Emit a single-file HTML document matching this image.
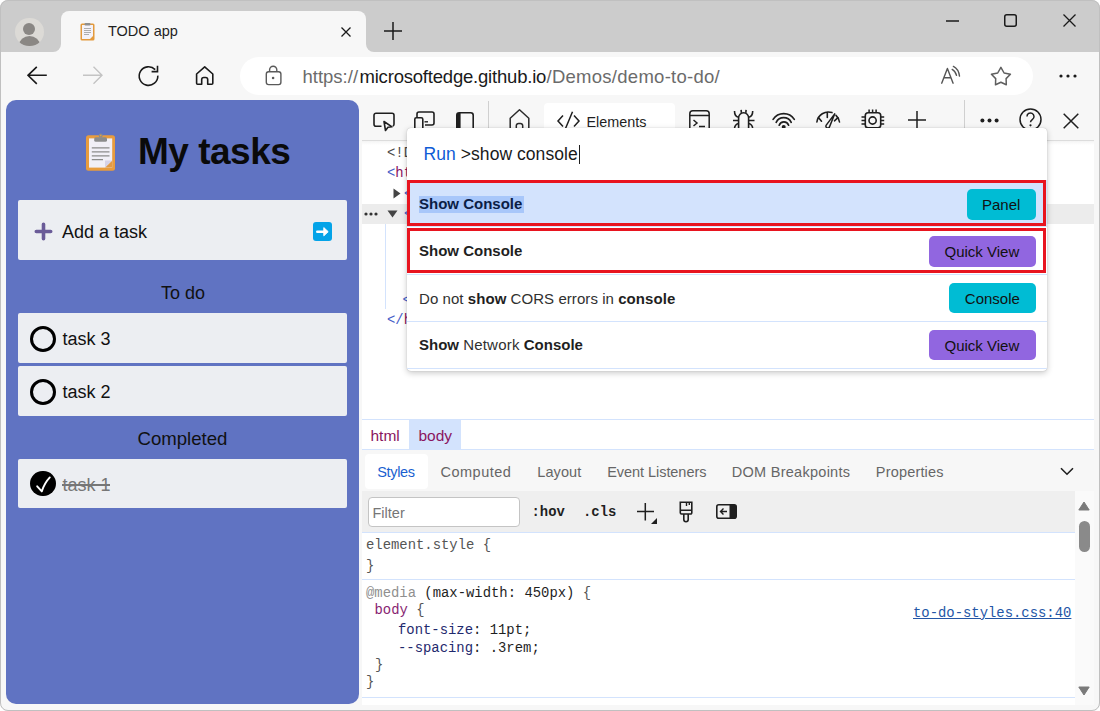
<!DOCTYPE html>
<html><head><meta charset="utf-8">
<style>
*{box-sizing:border-box;margin:0;padding:0}
html,body{width:1100px;height:711px;overflow:hidden;background:#fff;font-family:"Liberation Sans",sans-serif}
.a{position:absolute}
#win{position:absolute;left:0;top:0;width:1100px;height:711px;border-radius:8px;background:#cccccc;overflow:hidden}
svg{position:absolute;overflow:visible}
.t{position:absolute;white-space:pre;line-height:1}
.mono{font-family:"Liberation Mono",monospace}
</style></head><body>
<div id="win">
  <!-- tab -->
  <div class="a" style="left:61px;top:11px;width:305px;height:41px;background:#f7f7f7;border-radius:8px 8px 0 0"></div>
  <div class="a" style="left:53px;top:44px;width:8px;height:8px;background:#f7f7f7"></div>
  <div class="a" style="left:45px;top:36px;width:16px;height:16px;background:#cccccc;border-radius:0 0 8px 0"></div>
  <div class="a" style="left:366px;top:44px;width:8px;height:8px;background:#f7f7f7"></div>
  <div class="a" style="left:366px;top:36px;width:16px;height:16px;background:#cccccc;border-radius:0 0 0 8px"></div>
  <!-- toolbar + content bg -->
  <div class="a" style="left:0;top:52px;width:1100px;height:659px;background:#f7f7f7"></div>
  <!-- address bar -->
  <div class="a" style="left:240px;top:57px;width:793px;height:38px;background:#fff;border-radius:19px"></div>

  <!-- profile avatar -->
  <div class="a" style="left:15px;top:17.5px;width:28.5px;height:28.5px;border-radius:50%;background:#dcdad6;overflow:hidden">
    <div class="a" style="left:8.2px;top:5.2px;width:12px;height:12px;border-radius:50%;background:#8a8784"></div>
    <div class="a" style="left:3.8px;top:18.2px;width:21px;height:18px;border-radius:50%;background:#8a8784"></div>
  </div>
  <!-- tab favicon -->
  <svg style="left:80px;top:22px" width="15" height="19" viewBox="0 0 15 19">
    <rect x="0.5" y="1.5" width="14" height="17" rx="1.5" fill="#e39a3c"/>
    <rect x="2" y="3" width="11" height="14" fill="#f4f2f8"/>
    <path d="M10 17 L13 14 L13 17 Z" fill="#e39a3c"/>
    <rect x="4.5" y="1" width="6" height="2.5" rx="1" fill="#8f8f8f"/>
    <path d="M4 6.5h7M4 8.5h7M4 10.5h7M4 12.5h5" stroke="#9a9a9a" stroke-width="0.8"/>
  </svg>
  <div class="t" style="left:108px;top:24px;font-size:14.5px;color:#1f1f1f">TODO app</div>
  <!-- tab close -->
  <svg style="left:341px;top:27px" width="10" height="10"><path d="M0.5 0.5L9.5 9.5M9.5 0.5L0.5 9.5" stroke="#1a1a1a" stroke-width="1.3"/></svg>
  <!-- new tab plus -->
  <svg style="left:384px;top:22px" width="18" height="18"><path d="M9 0V18M0 9H18" stroke="#1a1a1a" stroke-width="1.5"/></svg>
  <!-- window controls -->
  <svg style="left:946px;top:20px" width="13" height="2"><path d="M0 1H13" stroke="#1a1a1a" stroke-width="1.5"/></svg>
  <svg style="left:1004px;top:14px" width="13" height="13"><rect x="0.75" y="0.75" width="11.5" height="11.5" rx="2" fill="none" stroke="#1a1a1a" stroke-width="1.5"/></svg>
  <svg style="left:1063px;top:14px" width="13" height="13"><path d="M0.5 0.5L12.5 12.5M12.5 0.5L0.5 12.5" stroke="#1a1a1a" stroke-width="1.3"/></svg>

  <!-- nav icons -->
  <svg style="left:27px;top:66px" width="21" height="19"><path d="M1 9.3H19.8M9.8 0.8L1 9.3L9.8 17.8" fill="none" stroke="#1a1a1a" stroke-width="1.6"/></svg>
  <svg style="left:83px;top:66px" width="21" height="19"><path d="M0 9.3H19M10.5 0.8L19 9.3L10.5 17.8" fill="none" stroke="#c4c4c4" stroke-width="1.4"/></svg>
  <svg style="left:138px;top:65px" width="22" height="22"><path d="M19.8 10.6A9.3 9.3 0 1 1 17.2 4.6" fill="none" stroke="#1a1a1a" stroke-width="1.6"/><path d="M19.5 0.8V6.6H13.6" fill="none" stroke="#1a1a1a" stroke-width="1.6"/></svg>
  <svg style="left:194px;top:66px" width="21" height="20"><path d="M2.6 8L10.7 0.9L18.8 8V17.2a1 1 0 0 1-1 1H13.7V13.6a2.1 2.1 0 0 0-2.1-2.1H9.8a2.1 2.1 0 0 0-2.1 2.1V18.2H3.6a1 1 0 0 1-1-1Z" fill="none" stroke="#1a1a1a" stroke-width="1.6" stroke-linejoin="round"/></svg>
  <!-- lock -->
  <svg style="left:264px;top:65px" width="18" height="21"><path d="M5.6 6.5V4.8a3.6 3.6 0 0 1 7.2 0V6.5" fill="none" stroke="#5a5a5a" stroke-width="1.4"/><rect x="2.3" y="6.8" width="14.6" height="12.8" rx="2.3" fill="none" stroke="#5a5a5a" stroke-width="1.4"/><circle cx="9.1" cy="13" r="1.3" fill="#5a5a5a"/></svg>
  <div class="t" style="left:302.5px;top:67.5px;font-size:18.5px;color:#6b6b6b">https://</div>
  <div class="t" style="left:359.5px;top:67.5px;font-size:18.5px;color:#1a1a1a;letter-spacing:-0.2px">microsoftedge.github.io</div>
  <div class="t" style="left:546.5px;top:67.5px;font-size:18.5px;color:#6b6b6b;letter-spacing:0.27px">/Demos/demo-to-do/</div>
  <!-- read aloud -->
  <svg style="left:941px;top:66px" width="20" height="19"><path d="M0.7 17.2L6.4 2.5L12.1 17.2M3.2 11.7H9.6" fill="none" stroke="#555" stroke-width="1.4" stroke-linecap="round" stroke-linejoin="round"/><path d="M11.2 3.4Q14.6 5.3 15.5 9.4M12.4 0.4Q17.6 3 18.5 10.1" fill="none" stroke="#555" stroke-width="1.4" stroke-linecap="round"/></svg>
  <!-- star -->
  <svg style="left:990px;top:66px" width="22" height="21"><path d="M10.9 1.4L14.1 7L20.4 8.3L16.1 12.6L16.3 18.8L10.9 16.2L5.5 18.8L5.7 12.6L1.4 8.3L7.7 7Z" fill="none" stroke="#5f5f5f" stroke-width="1.5" stroke-linejoin="round"/></svg>
  <!-- more -->
  <svg style="left:1059px;top:74px" width="18" height="4"><circle cx="2" cy="2" r="1.6" fill="#1a1a1a"/><circle cx="9" cy="2" r="1.6" fill="#1a1a1a"/><circle cx="16" cy="2" r="1.6" fill="#1a1a1a"/></svg>

  <!-- ============ APP PANEL ============ -->
  <div class="a" style="left:6px;top:100px;width:353px;height:604px;background:#6073c2;border-radius:10px"></div>

  <!-- clipboard emoji -->
  <svg style="left:86px;top:134.5px" width="29" height="36" viewBox="0 0 29 36">
    <rect x="0" y="0.3" width="29" height="35.4" rx="2.5" fill="#e89c3e"/>
    <rect x="3" y="3.4" width="23.2" height="29.2" fill="#f1eff7"/>
    <path d="M19 32.6L26.2 25.4V32.6Z" fill="#e09a48"/>
    <path d="M19 32.6V25.4H26.2Z" fill="#d6d2e8"/>
    <rect x="8.2" y="2.2" width="12.8" height="4.6" rx="1.6" fill="#8c8c8c"/>
    <circle cx="14.7" cy="0.6" r="2" fill="#8c8c8c"/>
    <circle cx="14.7" cy="0.6" r="0.8" fill="#e89c3e"/>
    <path d="M5.8 12.9h17.7M5.8 16.8h17.7M5.8 20.8h17.7M5.8 24.7h11.2" stroke="#8c8c8c" stroke-width="1.3"/>
  </svg>
  <div class="t" style="left:138px;top:133.2px;font-size:37px;font-weight:700;color:#0a0a0a;letter-spacing:-0.5px">My tasks</div>
  <!-- add task box -->
  <div class="a" style="left:18px;top:200px;width:329px;height:60px;background:#eceef2;border-radius:2px"></div>
  <svg style="left:34px;top:222px" width="19" height="19"><path d="M9.5 2.3V16.7M2.3 9.5H16.7" stroke="#6a5b98" stroke-width="3.6" stroke-linecap="round"/></svg>
  <div class="t" style="left:62px;top:222.6px;font-size:18px;color:#111">Add a task</div>
  <div class="a" style="left:313px;top:222px;width:18.7px;height:19px;background:#04a3e8;border-radius:3px"></div>
  <svg style="left:313px;top:222px" width="19" height="19"><path d="M4.3 9.7H11.5" stroke="#fff" stroke-width="2.6" stroke-linecap="round"/><path d="M10.8 5.6L15.2 9.7L10.8 13.8Z" fill="#fff" stroke="#fff" stroke-width="1" stroke-linejoin="round"/></svg>
  <div class="t" style="left:161px;top:284px;font-size:18px;color:#111">To do</div>
  <!-- task 3 -->
  <div class="a" style="left:18px;top:313px;width:329px;height:50px;background:#eceef2;border-radius:2px"></div>
  <div class="a" style="left:30px;top:326px;width:26px;height:26px;border:3px solid #000;border-radius:50%"></div>
  <div class="t" style="left:62.5px;top:330px;font-size:18px;color:#111">task 3</div>
  <!-- task 2 -->
  <div class="a" style="left:18px;top:366px;width:329px;height:50px;background:#eceef2;border-radius:2px"></div>
  <div class="a" style="left:30px;top:379px;width:26px;height:26px;border:3px solid #000;border-radius:50%"></div>
  <div class="t" style="left:62.5px;top:383px;font-size:18px;color:#111">task 2</div>
  <div class="t" style="left:137.5px;top:430px;font-size:18.6px;color:#111">Completed</div>
  <!-- task 1 -->
  <div class="a" style="left:18px;top:459px;width:329px;height:49px;background:#eceef2;border-radius:2px"></div>
  <div class="a" style="left:30.4px;top:470.8px;width:25.6px;height:25.6px;background:#000;border-radius:50%"></div>
  <svg style="left:30px;top:471px" width="26" height="26"><path d="M7.2 15.3L11.8 20.4Q14.3 12.3 19.8 6.4" fill="none" stroke="#fff" stroke-width="1.9" stroke-linecap="round" stroke-linejoin="round"/></svg>
  <div class="t" style="left:62.5px;top:476px;font-size:18px;color:#767676">task 1</div>
  <div class="a" style="left:62px;top:484px;width:48px;height:1.6px;background:#767676"></div>

  <!-- ============ DEVTOOLS ============ -->
  <div class="a" style="left:362px;top:140px;width:731.5px;height:1px;background:#dcdcdc"></div>
  <div class="a" style="left:362px;top:141px;width:731.5px;height:278px;background:linear-gradient(#f4f4f4,#fff 4px)"></div>
  <!-- toolbar icons -->
  <svg style="left:373px;top:112px" width="22" height="20" viewBox="0 0 22 20"><path d="M8.5 14.2H3a2 2 0 0 1-2-2V3.2a2 2 0 0 1 2-2h16a2 2 0 0 1 2 2v9a2 2 0 0 1-1.2 1.8" fill="none" stroke="#1f1f1f" stroke-width="1.6"/><path d="M11 9.5L19 14.8L15 15.3L12.5 18.5Z" fill="none" stroke="#1f1f1f" stroke-width="1.6" stroke-linejoin="round"/></svg>
  <svg style="left:414px;top:111px" width="21" height="20" viewBox="0 0 21 20"><path d="M3 6V3a2 2 0 0 1 2-2h13a2 2 0 0 1 2 2v9a2 2 0 0 1-2 2H11" fill="none" stroke="#1f1f1f" stroke-width="1.6"/><rect x="0.8" y="6.8" width="8" height="13" rx="1.5" fill="none" stroke="#1f1f1f" stroke-width="1.6"/><path d="M10.5 10.8H14" stroke="#1f1f1f" stroke-width="1.4"/><path d="M4 18.2h1.6" stroke="#1f1f1f" stroke-width="1.2"/></svg>
  <svg style="left:456px;top:112px" width="18" height="20" viewBox="0 0 18 20"><rect x="0.8" y="0.8" width="16.4" height="19" rx="2.5" fill="none" stroke="#1f1f1f" stroke-width="1.6"/><path d="M0.8 3.3a2.5 2.5 0 0 1 2.5-2.5H4.6V19.8H3.3a2.5 2.5 0 0 1-2.5-2.5Z" fill="#1f1f1f"/></svg>
  <div class="a" style="left:487.5px;top:101px;width:1px;height:28px;background:#d0d0d0"></div>
  <svg style="left:509px;top:109px" width="21" height="22" viewBox="0 0 21 22"><path d="M1.2 21V9.2L10.5 0.8L19.8 9.2V21" fill="none" stroke="#2a2a2a" stroke-width="1.5" stroke-linejoin="round"/><path d="M7.3 21v-4.3a2.2 2.2 0 0 1 2.2-2.2h2a2.2 2.2 0 0 1 2.2 2.2V21" fill="none" stroke="#2a2a2a" stroke-width="1.5"/></svg>
  <!-- elements tab -->
  <div class="a" style="left:544px;top:103px;width:131px;height:38px;background:#fff;border-radius:4px 4px 0 0"></div>
  <svg style="left:557px;top:111px" width="23" height="20" viewBox="0 0 23 20"><path d="M6 4.5L1 10L6 15.5M17 4.5L22 10L17 15.5M15.5 0.8L8.5 17.5" fill="none" stroke="#1f1f1f" stroke-width="1.5"/></svg>
  <div class="t" style="left:586.5px;top:114.5px;font-size:14.4px;color:#1f1f1f">Elements</div>
  <svg style="left:689px;top:110px" width="21" height="22" viewBox="0 0 21 22"><rect x="0.8" y="0.8" width="19.4" height="20.4" rx="3" fill="none" stroke="#1f1f1f" stroke-width="1.5"/><path d="M1 5.5H20" stroke="#1f1f1f" stroke-width="1.5"/><path d="M4.5 10L8 13L4.5 16M10 16.5H16" fill="none" stroke="#1f1f1f" stroke-width="1.5"/></svg>
  <svg style="left:732px;top:109px" width="24" height="22" viewBox="0 0 24 22"><path d="M6.6 19V8.8a5 5 0 0 1 10 0V19" fill="none" stroke="#1f1f1f" stroke-width="1.6"/><path d="M9.4 3.8L9.1 0.8M13.8 3.8L14.1 0.8M6.6 8.3Q2.5 7.5 2.5 2M16.6 8.3Q20.7 7.5 20.7 2M1 11.5H6.6M16.6 11.5H22.5M6.6 14.5Q2.5 15.5 2.5 20M16.6 14.5Q20.7 15.5 20.7 20" fill="none" stroke="#1f1f1f" stroke-width="1.6"/></svg>
  <svg style="left:772px;top:109px" width="24" height="20" viewBox="0 0 24 20"><path d="M1.1 10.4A12.6 12.6 0 0 1 22.3 10.4M4.2 13.3A8.4 8.4 0 0 1 19.2 13.3M7.2 16.2A5 5 0 0 1 16.6 16.2" fill="none" stroke="#1f1f1f" stroke-width="1.7" stroke-linecap="round"/><circle cx="11.7" cy="18" r="2" fill="#1f1f1f"/></svg>
  <svg style="left:816px;top:109px" width="25" height="20" viewBox="0 0 25 20"><path d="M0.9 13A11.6 11.6 0 0 1 16 3.6M20 6.3A11.6 11.6 0 0 1 23.5 13" fill="none" stroke="#1f1f1f" stroke-width="1.6" stroke-linecap="round"/><path d="M2.6 8.7L5.5 12.2M11.3 3.6V8.5M21.9 8.7L18.5 11.8" stroke="#1f1f1f" stroke-width="1.6" stroke-linecap="round"/><path d="M18.7 4.9L13.35 18.23A1.9 1.9 0 0 1 10.05 16.37Z" fill="none" stroke="#1f1f1f" stroke-width="1.5" stroke-linejoin="round"/></svg>
  <svg style="left:861px;top:109px" width="24" height="22" viewBox="0 0 24 22"><rect x="4.3" y="3.7" width="15.4" height="15" rx="2.8" fill="none" stroke="#1f1f1f" stroke-width="1.6"/><circle cx="11.6" cy="11.5" r="3.6" fill="none" stroke="#1f1f1f" stroke-width="1.6"/><path d="M8.1 0.5V3.7M11.6 0.5V3.7M15.1 0.5V3.7M0.5 8H4.3M0.5 11.5H4.3M0.5 15H4.3M19.7 8H23.2M19.7 11.5H23.2M19.7 15H23.2" stroke="#1f1f1f" stroke-width="1.5"/></svg>
  <svg style="left:908px;top:111px" width="18" height="18"><path d="M9 0V18M0 9H18" stroke="#1f1f1f" stroke-width="1.5"/></svg>
  <div class="a" style="left:963.5px;top:100px;width:1px;height:28px;background:#d0d0d0"></div>
  <svg style="left:980px;top:118px" width="19" height="5"><circle cx="2.4" cy="2.5" r="2" fill="#1f1f1f"/><circle cx="9.5" cy="2.5" r="2" fill="#1f1f1f"/><circle cx="16.6" cy="2.5" r="2" fill="#1f1f1f"/></svg>
  <svg style="left:1019px;top:108px" width="23" height="23" viewBox="0 0 23 23"><circle cx="11.5" cy="11.5" r="10.5" fill="none" stroke="#1f1f1f" stroke-width="1.5"/><path d="M8 8.5a3.5 3.5 0 1 1 5.5 2.8c-1.2.8-2 1.4-2 3" fill="none" stroke="#1f1f1f" stroke-width="1.5"/><circle cx="11.5" cy="17.3" r="1.1" fill="#1f1f1f"/></svg>
  <svg style="left:1063px;top:113px" width="16" height="16"><path d="M0.7 0.7L15.3 15.3M15.3 0.7L0.7 15.3" stroke="#1f1f1f" stroke-width="1.5"/></svg>

  <!-- DOM tree -->
  <div class="a" style="left:362px;top:204px;width:731.5px;height:20px;background:#ececec"></div>
  <div class="t mono" style="left:387px;top:147px;font-size:13.9px;color:#4a4a4a">&lt;!DOCTYPE html&gt;</div>
  <div class="t mono" style="left:387px;top:167px;font-size:13.9px;color:#4660c8">&lt;<span style="color:#8a1560">html</span> <span style="color:#994500">lang</span>="<span style="color:#1a1aa6">en</span>"&gt;</div>
  <svg style="left:393px;top:188px" width="8" height="11"><path d="M0.5 0.5L7.5 5.5L0.5 10.5Z" fill="#444"/></svg>
  <div class="t mono" style="left:404px;top:188px;font-size:13.9px;color:#4660c8">&lt;<span style="color:#8a1560">head</span>&gt;</div>
  <svg style="left:364px;top:212px" width="14" height="4"><circle cx="2" cy="2" r="1.6" fill="#333"/><circle cx="7" cy="2" r="1.6" fill="#333"/><circle cx="12" cy="2" r="1.6" fill="#333"/></svg>
  <svg style="left:387px;top:210px" width="11" height="8"><path d="M0.5 0.5L10.5 0.5L5.5 7.5Z" fill="#444"/></svg>
  <div class="t mono" style="left:404px;top:208px;font-size:13.9px;color:#4660c8">&lt;<span style="color:#8a1560">body</span>&gt;</div>
  <div class="a" style="left:385px;top:224px;width:1px;height:85px;background:#d3e3fd"></div>
  <div class="t mono" style="left:402.5px;top:294px;font-size:13.9px;color:#4660c8">&lt;<span style="color:#8a1560">script</span>&gt;</div>
  <div class="t mono" style="left:387px;top:314px;font-size:13.9px;color:#4660c8">&lt;/<span style="color:#8a1560">html</span>&gt;</div>

  <!-- breadcrumb -->
  <div class="a" style="left:362px;top:419px;width:732px;height:31px;background:#fff;border-top:1px solid #d3e3fd;border-bottom:1px solid #d3e3fd"></div>
  <div class="a" style="left:409px;top:420px;width:52px;height:29px;background:#d3e3fd"></div>
  <div class="t" style="left:370.5px;top:427.5px;font-size:15.5px;color:#8a1560">html</div>
  <div class="t" style="left:418.5px;top:427.5px;font-size:15.5px;color:#8a1560">body</div>
  <!-- tabs bar -->
  <div class="a" style="left:362px;top:450px;width:732px;height:41px;background:#f7f7f7"></div>
  <div class="a" style="left:364.5px;top:453.5px;width:63.5px;height:35px;background:#fff;border-radius:4px"></div>
  <div class="t" style="left:377.3px;top:465px;font-size:14.5px;color:#1a5fd0;letter-spacing:-0.36px">Styles</div>
  <div class="t" style="left:440.5px;top:465px;font-size:14.5px;color:#666;letter-spacing:0.5px">Computed</div>
  <div class="t" style="left:537.3px;top:465px;font-size:14.5px;color:#666;letter-spacing:0.09px">Layout</div>
  <div class="t" style="left:607.2px;top:465px;font-size:14.5px;color:#666;letter-spacing:-0.05px">Event Listeners</div>
  <div class="t" style="left:731.8px;top:465px;font-size:14.5px;color:#666;letter-spacing:0.27px">DOM Breakpoints</div>
  <div class="t" style="left:875.8px;top:465px;font-size:14.5px;color:#666;letter-spacing:0.18px">Properties</div>
  <svg style="left:1060px;top:467px" width="14" height="9"><path d="M1 1.2L7 7.2L13 1.2" fill="none" stroke="#1f1f1f" stroke-width="1.6"/></svg>
  <!-- styles toolbar -->
  <div class="a" style="left:362px;top:491px;width:713px;height:42px;background:#efefef;border-bottom:1px solid #d3e3fd"></div>
  <div class="a" style="left:367.5px;top:497px;width:152px;height:30px;background:#fff;border:1px solid #c4c4c4;border-radius:4px"></div>
  <div class="t" style="left:372.5px;top:506px;font-size:14.5px;color:#767676">Filter</div>
  <div class="t mono" style="left:531.5px;top:505.5px;font-size:13.9px;font-weight:700;color:#1f1f1f">:hov</div>
  <div class="t mono" style="left:583px;top:505.5px;font-size:13.9px;font-weight:700;color:#1f1f1f">.cls</div>
  <svg style="left:636px;top:502px" width="22" height="23"><path d="M9.3 1V18.5M1 9.5H18" stroke="#1f1f1f" stroke-width="1.5"/><path d="M21 16V22H15Z" fill="#1f1f1f"/></svg>
  <svg style="left:679px;top:501px" width="15" height="22" viewBox="0 0 15 22"><path d="M1.3 1.3H12.8V11.8a1.2 1.2 0 0 1-1.2 1.2H2.5A1.2 1.2 0 0 1 1.3 11.8Z" fill="none" stroke="#1f1f1f" stroke-width="1.6"/><path d="M1.3 9.2H12.8M7.5 1.3V5M10.3 1.3V4" stroke="#1f1f1f" stroke-width="1.4"/><path d="M4.8 13V18.5a2.2 2.2 0 0 0 4.4 0V13" fill="none" stroke="#1f1f1f" stroke-width="1.6"/></svg>
  <svg style="left:716px;top:504px" width="21" height="15" viewBox="0 0 21 15"><rect x="0.8" y="0.8" width="19.4" height="13.4" rx="2" fill="none" stroke="#1f1f1f" stroke-width="1.6"/><path d="M13.5 0.8H18.2a2 2 0 0 1 2 2V12.2a2 2 0 0 1-2 2H13.5Z" fill="#1f1f1f"/><path d="M11 7.5H4.5M7.5 4.5L4.5 7.5L7.5 10.5" fill="none" stroke="#1f1f1f" stroke-width="1.4"/></svg>
  <!-- styles content -->
  <div class="a" style="left:362px;top:533px;width:713px;height:172px;background:#fff"></div>
  <div class="t mono" style="left:366px;top:538.5px;font-size:13.9px;color:#555">element.style {</div>
  <div class="t mono" style="left:366px;top:559.5px;font-size:13.9px;color:#555">}</div>
  <div class="a" style="left:362px;top:578.5px;width:713px;height:1px;background:#d3e3fd"></div>
  <div class="t mono" style="left:366px;top:586.5px;font-size:13.9px;color:#1f1f1f"><span style="color:#8f8f8f">@media</span> (max-width: 450px) <span style="color:#555">{</span></div>
  <div class="t mono" style="left:374.5px;top:604px;font-size:13.9px;color:#881f72">body <span style="color:#555">{</span></div>
  <div class="t mono" style="left:398px;top:623.5px;font-size:13.9px;color:#1f2a6e">font-size<span style="color:#1f1f1f">: 11pt;</span></div>
  <div class="t mono" style="left:398px;top:642px;font-size:13.9px;color:#1f2a6e">--spacing<span style="color:#1f1f1f">: .3rem;</span></div>
  <div class="t mono" style="left:375px;top:659px;font-size:13.9px;color:#555">}</div>
  <div class="t mono" style="left:366px;top:676px;font-size:13.9px;color:#555">}</div>
  <div class="t mono" style="left:913px;top:606.5px;font-size:13.9px;color:#2456a6;text-decoration:underline">to-do-styles.css:40</div>
  <div class="a" style="left:362px;top:697px;width:713px;height:1px;background:#d3e3fd"></div>
  <!-- scrollbar -->
  <div class="a" style="left:1075px;top:491px;width:18.5px;height:214px;background:#fafafa"></div>
  <svg style="left:1078px;top:501px" width="12" height="10"><path d="M6 1L11.2 9H0.8Z" fill="#7a7a7a" stroke="#7a7a7a" stroke-width="1" stroke-linejoin="round"/></svg>
  <div class="a" style="left:1078.5px;top:520.5px;width:11.5px;height:31.5px;background:#8a8a8a;border-radius:6px"></div>
  <svg style="left:1078px;top:686px" width="12" height="10"><path d="M6 9L11.2 1H0.8Z" fill="#7a7a7a" stroke="#7a7a7a" stroke-width="1" stroke-linejoin="round"/></svg>

  <!-- ============ COMMAND MENU POPUP ============ -->
  <div class="a" style="left:407px;top:128px;width:640px;height:243px;background:#fff;border-radius:4px;box-shadow:0 2px 6px rgba(0,0,0,0.22),0 0 1px rgba(0,0,0,0.3);overflow:hidden">
    <div class="t" style="left:16.6px;top:17.7px;font-size:17.5px;color:#0f5bd6">Run</div>
    <div class="t" style="left:53.8px;top:17.7px;font-size:17.5px;color:#1a1a1a;letter-spacing:0.05px">&gt;show console</div>
    <div class="a" style="left:172px;top:17px;width:1.3px;height:19px;background:#1f1f1f"></div>
    <!-- row 1 -->
    <div class="a" style="left:0;top:52px;width:640px;height:47px;background:#d3e3fd;border-bottom:1px solid #d3e3fd"></div>
    <div class="a" style="left:11.5px;top:68px;width:105px;height:16.5px;background:#a8c7fa"></div>
    <div class="t" style="left:12px;top:68.3px;font-size:15px;font-weight:700;color:#0b1d45">Show Console</div>
    <div class="a" style="left:559.5px;top:61px;width:69.5px;height:31px;background:#00bcd4;border-radius:5px"></div>
    <div class="t" style="left:575px;top:68.7px;font-size:15px;color:#111">Panel</div>
    <!-- row 2 -->
    <div class="a" style="left:0;top:99px;width:640px;height:48px;border-bottom:1px solid #d3e3fd"></div>
    <div class="t" style="left:12px;top:115.3px;font-size:15px;font-weight:700;color:#1f1f1f">Show Console</div>
    <div class="a" style="left:522.3px;top:108.2px;width:106.7px;height:30.5px;background:#9166e0;border-radius:5px"></div>
    <div class="t" style="left:537.5px;top:115.7px;font-size:15px;color:#111">Quick View</div>
    <!-- row 3 -->
    <div class="a" style="left:0;top:147px;width:640px;height:47px;border-bottom:1px solid #d3e3fd"></div>
    <div class="t" style="left:12px;top:162.6px;font-size:15px;color:#303030;letter-spacing:0.06px">Do not <b style="color:#1f1f1f">show</b> CORS errors in <b style="color:#1f1f1f">console</b></div>
    <div class="a" style="left:542.4px;top:155.1px;width:86.6px;height:30.2px;background:#00bcd4;border-radius:5px"></div>
    <div class="t" style="left:557.8px;top:162.7px;font-size:15px;color:#111">Console</div>
    <!-- row 4 -->
    <div class="a" style="left:0;top:194px;width:640px;height:47px;border-bottom:1px solid #d3e3fd"></div>
    <div class="t" style="left:12px;top:209.3px;font-size:15px;color:#303030"><b style="color:#1f1f1f">Show</b> <span style="letter-spacing:0.2px">Network</span> <b style="color:#1f1f1f">Console</b></div>
    <div class="a" style="left:522.3px;top:202.3px;width:106.7px;height:29.9px;background:#9166e0;border-radius:5px"></div>
    <div class="t" style="left:537.5px;top:209.5px;font-size:15px;color:#111">Quick View</div>
  </div>
  <!-- red annotation boxes -->
  <div class="a" style="left:407px;top:180px;width:639px;height:46px;border:3px solid #e8141f"></div>
  <div class="a" style="left:407px;top:228px;width:639px;height:45px;border:3px solid #e8141f"></div>
</div>
<div class="a" style="left:0;top:0;width:1100px;height:711px;border:1px solid #c0c0c0;border-radius:8px;pointer-events:none"></div>
</body></html>
